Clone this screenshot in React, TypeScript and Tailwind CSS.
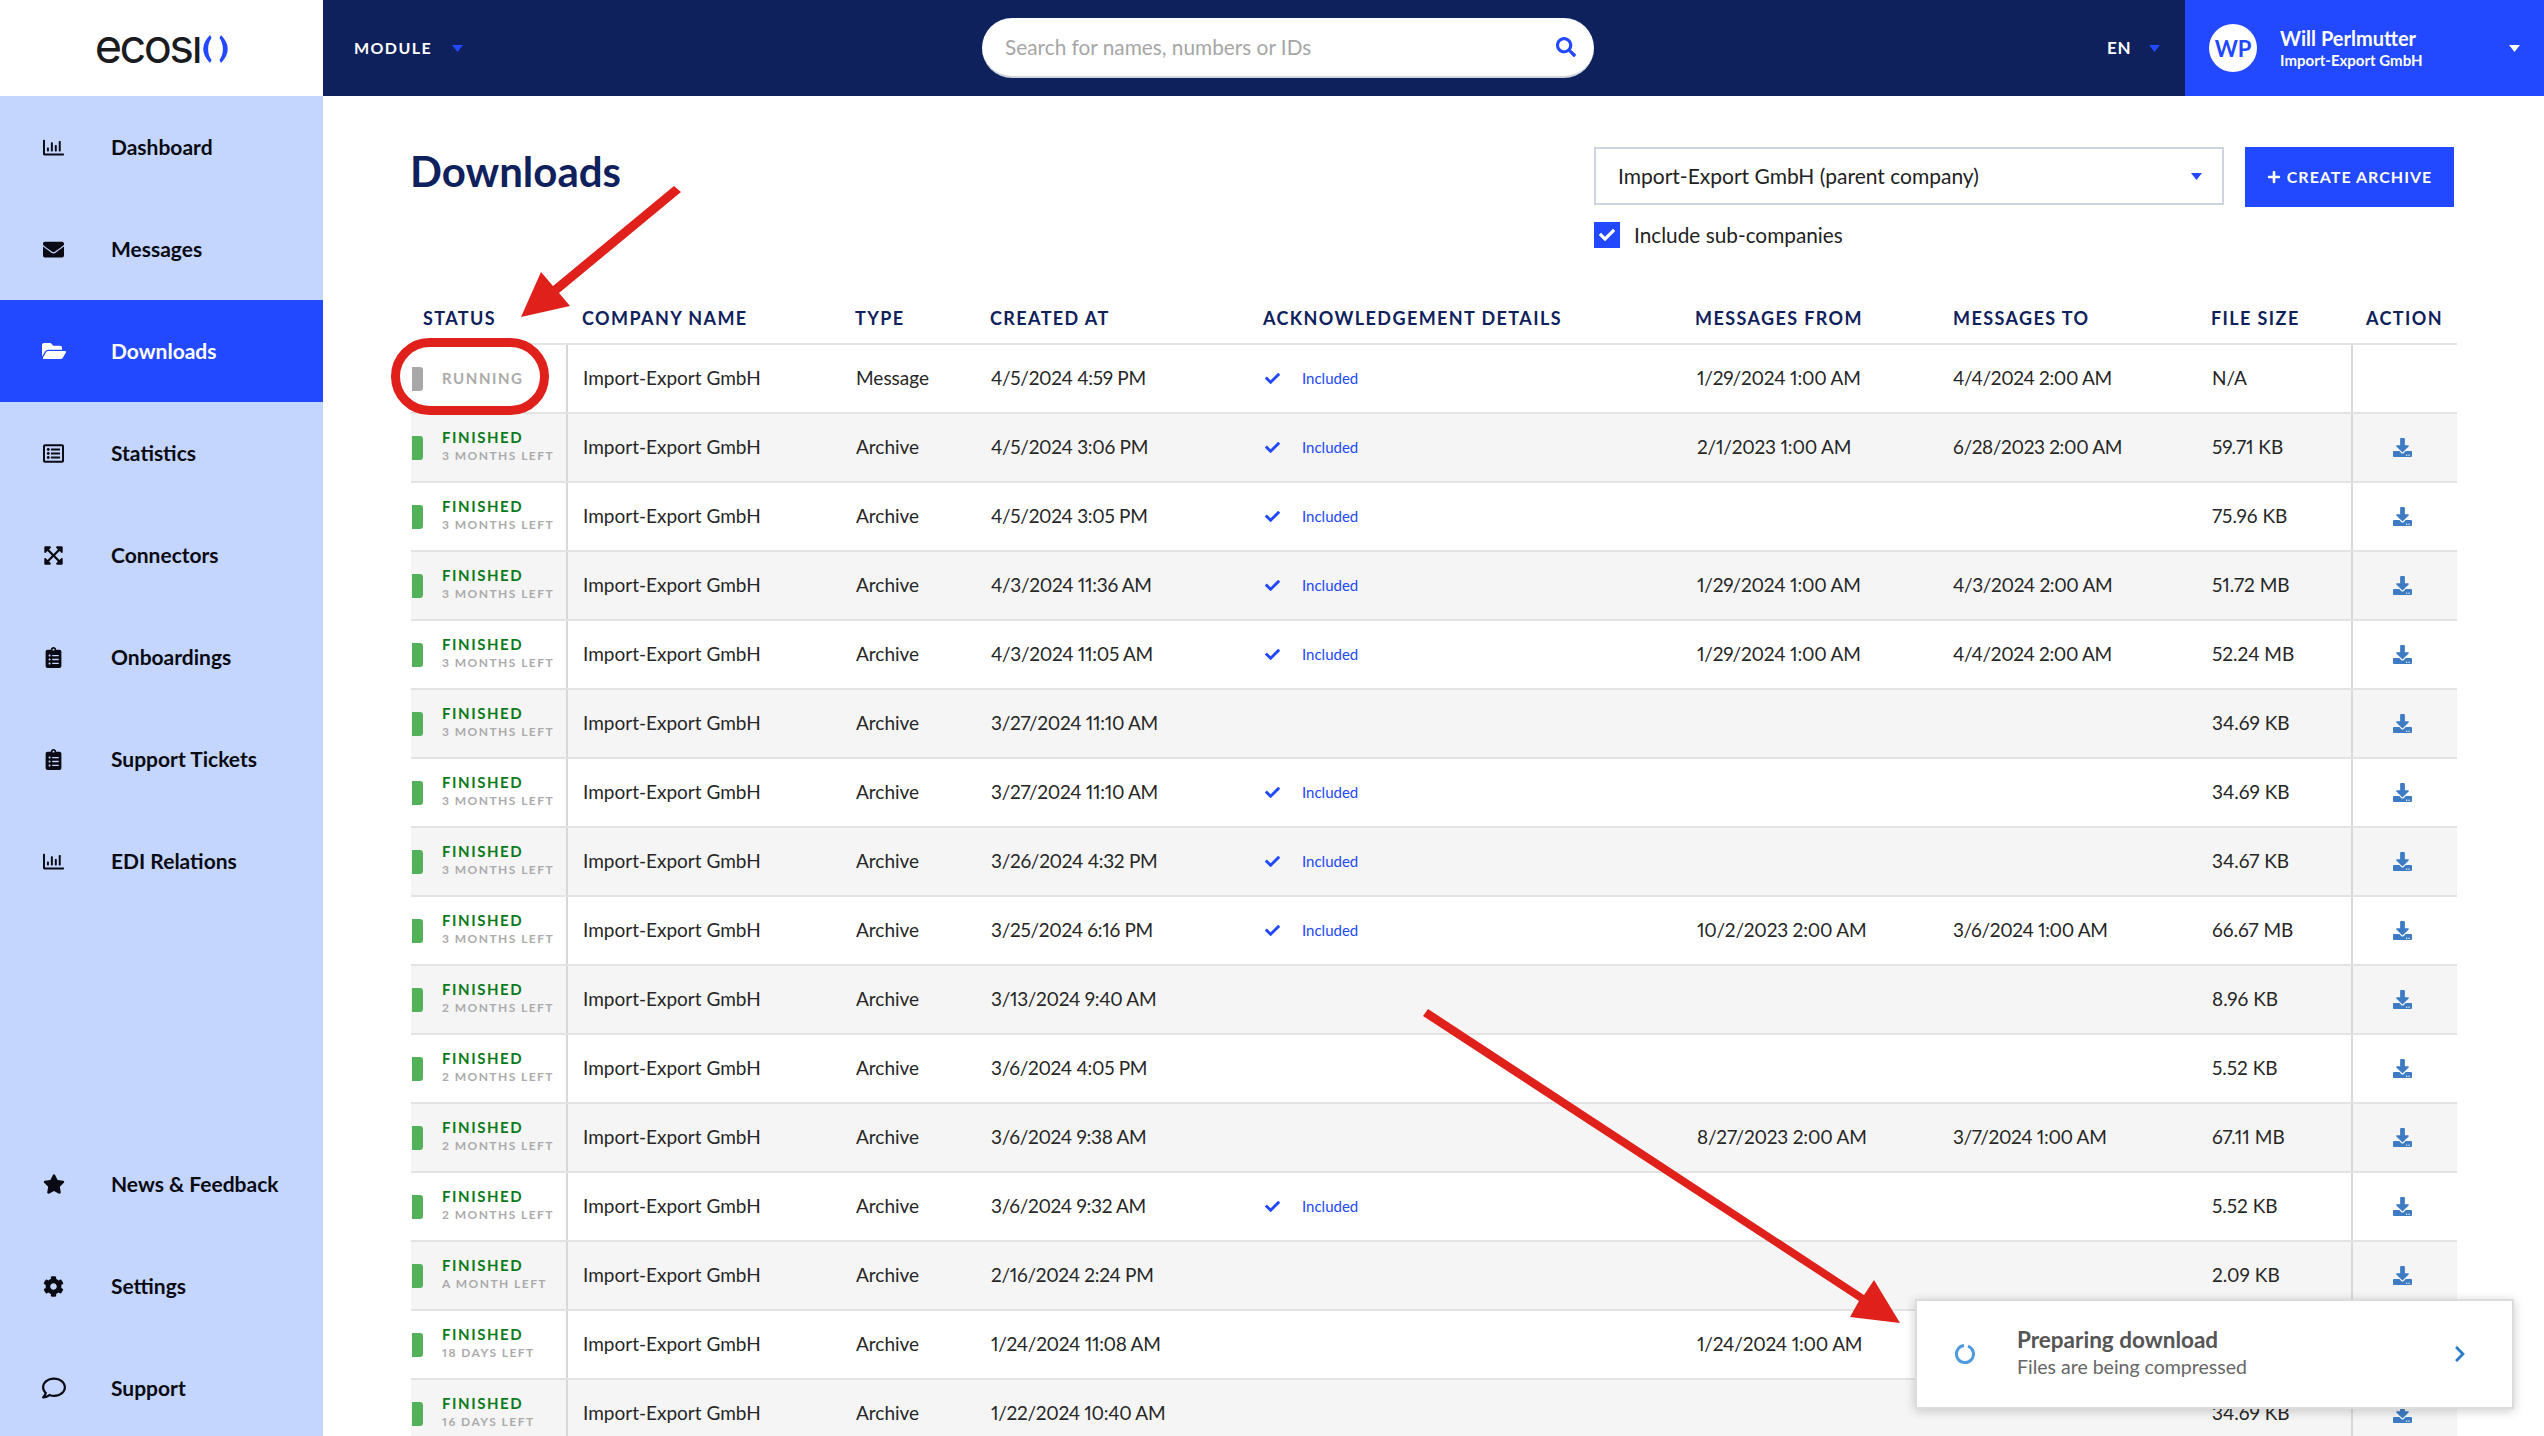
import React from "react";
import {
  FaRegChartBar, FaEnvelope, FaFolderOpen, FaRegListAlt, FaExpandArrowsAlt, FaClipboardList,
  FaStar, FaCog, FaRegComment, FaDownload, FaCheck, FaSearch, FaPlus, FaChevronRight,
} from "react-icons/fa";

const top = [
  { label: "Dashboard", Icon: FaRegChartBar, size: 21 },
  { label: "Messages", Icon: FaEnvelope, size: 21 },
  { label: "Downloads", Icon: FaFolderOpen, size: 24, active: true },
  { label: "Statistics", Icon: FaRegListAlt, size: 21 },
  { label: "Connectors", Icon: FaExpandArrowsAlt, size: 21 },
  { label: "Onboardings", Icon: FaClipboardList, size: 21 },
  { label: "Support Tickets", Icon: FaClipboardList, size: 21 },
  { label: "EDI Relations", Icon: FaRegChartBar, size: 21 },
];
const bottom = [
  { label: "News & Feedback", Icon: FaStar, size: 22 },
  { label: "Settings", Icon: FaCog, size: 21 },
  { label: "Support", Icon: FaRegComment, size: 24 },
];

type Row = { left: string; type: string; at: string; inc?: boolean; from?: string; to?: string; size: string };
const M3 = "3 MONTHS LEFT";
const M2 = "2 MONTHS LEFT";
const rows: Row[] = [
  { left: "", type: "Message", at: "4/5/2024 4:59 PM", inc: true, from: "1/29/2024 1:00 AM", to: "4/4/2024 2:00 AM", size: "N/A" },
  { left: M3, type: "Archive", at: "4/5/2024 3:06 PM", inc: true, from: "2/1/2023 1:00 AM", to: "6/28/2023 2:00 AM", size: "59.71 KB" },
  { left: M3, type: "Archive", at: "4/5/2024 3:05 PM", inc: true, size: "75.96 KB" },
  { left: M3, type: "Archive", at: "4/3/2024 11:36 AM", inc: true, from: "1/29/2024 1:00 AM", to: "4/3/2024 2:00 AM", size: "51.72 MB" },
  { left: M3, type: "Archive", at: "4/3/2024 11:05 AM", inc: true, from: "1/29/2024 1:00 AM", to: "4/4/2024 2:00 AM", size: "52.24 MB" },
  { left: M3, type: "Archive", at: "3/27/2024 11:10 AM", size: "34.69 KB" },
  { left: M3, type: "Archive", at: "3/27/2024 11:10 AM", inc: true, size: "34.69 KB" },
  { left: M3, type: "Archive", at: "3/26/2024 4:32 PM", inc: true, size: "34.67 KB" },
  { left: M3, type: "Archive", at: "3/25/2024 6:16 PM", inc: true, from: "10/2/2023 2:00 AM", to: "3/6/2024 1:00 AM", size: "66.67 MB" },
  { left: M2, type: "Archive", at: "3/13/2024 9:40 AM", size: "8.96 KB" },
  { left: M2, type: "Archive", at: "3/6/2024 4:05 PM", size: "5.52 KB" },
  { left: M2, type: "Archive", at: "3/6/2024 9:38 AM", from: "8/27/2023 2:00 AM", to: "3/7/2024 1:00 AM", size: "67.11 MB" },
  { left: M2, type: "Archive", at: "3/6/2024 9:32 AM", inc: true, size: "5.52 KB" },
  { left: "A MONTH LEFT", type: "Archive", at: "2/16/2024 2:24 PM", size: "2.09 KB" },
  { left: "18 DAYS LEFT", type: "Archive", at: "1/24/2024 11:08 AM", from: "1/24/2024 1:00 AM", size: "" },
  { left: "16 DAYS LEFT", type: "Archive", at: "1/22/2024 10:40 AM", size: "34.69 KB" },
];

const cols = "grid grid-cols-[157px_272px_135px_274px_432px_256px_258px_158px_104px]";

function Caret({ color }: { color: string }) {
  return (
    <svg width="11" height="7" viewBox="0 0 11 7" className="block">
      <path d="M0 0h11L5.5 7z" fill={color} />
    </svg>
  );
}

function NavItem({ label, Icon, size, active }: { label: string; Icon: any; size: number; active?: boolean }) {
  return (
    <div className={`flex h-[102px] shrink-0 items-center ${active ? "bg-[#2249ff] text-white" : "text-[#0a0a14]"}`}>
      <span className="flex w-[111px] justify-center pr-[4px]">
        <Icon size={size} />
      </span>
      <span className="text-[21px] font-bold">{label}</span>
    </div>
  );
}

export default function App() {
  return (
    <div className="relative flex h-[1436px] w-full overflow-hidden bg-white font-['Lato','Noto_Sans',sans-serif] proportional-nums">
      <aside className="flex w-[323px] shrink-0 flex-col bg-[#c4d6fe]">
        <div className="flex h-[96px] shrink-0 items-center justify-center bg-white">
          <span className="flex items-center text-[#1b1b1f]">
            <span className="font-['Inter',sans-serif] text-[47px] leading-none tracking-[-2.6px] pb-[6px]">ecosı</span>
            <svg width="25" height="28" viewBox="0 0 25 28" className="ml-[3px] mt-[2px]" fill="#2249ff">
              <path d="M7 0C-2 9-2 19 7 28L8.5 25C4 19 4 9 8.5 3Z" />
              <path d="M18 0C27 9 27 19 18 28L16.5 25C21 19 21 9 16.5 3Z" />
            </svg>
          </span>
        </div>
        {top.map((n) => <NavItem key={n.label} {...n} />)}
        <div className="h-[221px] shrink-0" />
        {bottom.map((n) => <NavItem key={n.label} {...n} />)}
      </aside>

      <div className="flex min-w-0 flex-1 flex-col">
        <header className="flex h-[96px] shrink-0 items-center bg-[#0f215c] text-white">
          <span className="ml-[31px] text-[16px] font-bold tracking-[1.4px]">MODULE</span>
          <span className="ml-[20px]"><Caret color="#2249ff" /></span>
          <div className="ml-[519px] flex h-[60px] w-[612px] items-center justify-between rounded-full border-b-2 border-[#d0d3dc] bg-white pl-[23px] pr-[18px]">
            <span className="text-[20.8px] text-[#a6a6a6]">Search for names, numbers or IDs</span>
            <FaSearch size={20} color="#2249ff" />
          </div>
          <span className="ml-[513px] text-[17px] font-bold tracking-[0.6px]">EN</span>
          <span className="ml-[18px]"><Caret color="#2249ff" /></span>
          <div className="ml-[25px] flex h-[96px] flex-1 items-center bg-[#2249ff]">
            <span className="ml-[24px] flex h-[48px] w-[48px] items-center justify-center rounded-full bg-white text-[22px] font-bold text-[#2249ff]">WP</span>
            <div className="ml-[23px] flex flex-1 flex-col">
              <span className="text-[20px] font-bold leading-[24px]">Will Perlmutter</span>
              <span className="text-[15px] font-bold leading-[20px]">Import-Export GmbH</span>
            </div>
            <span className="mr-[24px]"><Caret color="#ffffff" /></span>
          </div>
        </header>

        <main className="flex-1 pl-[88px]">
          <div className="flex h-[210px] items-start">
            <h1 className="-ml-[1px] w-[1184px] pt-[46px] text-[42px] font-bold leading-[58px] text-[#0f215c]">Downloads</h1>
            <div className="pt-[51px]">
              <div className="flex h-[58px] w-[630px] items-center justify-between border-2 border-[#cfd3e0] bg-white pl-[22px] pr-[20px] text-[21px] text-[#222]">
                <span>Import-Export GmbH (parent company)</span>
                <Caret color="#2249ff" />
              </div>
              <div className="mt-[17px] flex items-center">
                <span className="flex h-[26px] w-[26px] items-center justify-center bg-[#2249ff] text-white">
                  <FaCheck size={16} />
                </span>
                <span className="ml-[14px] text-[20.8px] leading-[26px] text-[#222]">Include sub-companies</span>
              </div>
            </div>
            <div className="ml-[21px] mt-[51px] flex h-[60px] w-[209px] items-center justify-center gap-[6px] bg-[#2249ff] text-[16px] font-bold tracking-[1px] text-white">
              <FaPlus size={14} />
              <span>CREATE ARCHIVE</span>
            </div>
          </div>

          <div className={`${cols} h-[37px] w-[2046px] items-start text-[18px] font-bold leading-[24px] tracking-[1.4px] text-[#0f215c]`}>
            <span className="pl-[12px]">STATUS</span>
            <span className="pl-[14px]">COMPANY NAME</span>
            <span className="pl-[15px]">TYPE</span>
            <span className="pl-[15px]">CREATED AT</span>
            <span className="pl-[14px]">ACKNOWLEDGEMENT DETAILS</span>
            <span className="pl-[14px]">MESSAGES FROM</span>
            <span className="pl-[16px]">MESSAGES TO</span>
            <span className="pl-[16px]">FILE SIZE</span>
            <span className="pl-[13px]">ACTION</span>
          </div>

          <div className="w-[2046px] border-l-2 border-r-2 border-[#e3e3e3]">
            {rows.map((r, i) => (
              <div key={i} className={`${cols} -mx-[2px] h-[69px] border-t-2 border-[#e3e3e3] text-[19px] text-[#262626] ${i % 2 ? "bg-[#f5f5f5]" : "bg-white"}`}>
                <div className="flex items-center border-r-2 border-[#d8d8d8]">
                  <span className={`ml-[1px] h-[24px] w-[11px] rounded-r-[3px] ${r.left ? "bg-[#52b159]" : "bg-[#a8a8a8]"}`} />
                  <div className="ml-[19px] flex flex-col">
                    {r.left ? (
                      <div className="flex -translate-y-[1px] flex-col">
                        <span className="text-[15px] font-bold leading-[19px] tracking-[1.55px] text-[#0c7a1c]">FINISHED</span>
                        <span className="text-[12px] font-bold leading-[18px] tracking-[1.45px] text-[#ababab]">{r.left}</span>
                      </div>
                    ) : (
                      <span className="text-[15px] font-bold tracking-[1.55px] text-[#ababab]">RUNNING</span>
                    )}
                  </div>
                </div>
                <div className="flex items-center pl-[15px]">Import-Export GmbH</div>
                <div className="flex items-center pl-[16px]">{r.type}</div>
                <div className="flex items-center pl-[16px] tracking-[-0.3px]">{r.at}</div>
                <div className="flex items-center pl-[16px]">
                  {r.inc && (
                    <>
                      <FaCheck size={15} color="#2249ff" />
                      <span className="ml-[22px] text-[15px] text-[#2249ff]">Included</span>
                    </>
                  )}
                </div>
                <div className="flex items-center pl-[16px] tracking-[-0.2px]">{r.from}</div>
                <div className="flex items-center pl-[16px] tracking-[-0.35px]">{r.to}</div>
                <div className="flex items-center border-r-2 border-[#d8d8d8] pl-[17px]">{r.size}</div>
                <div className="flex items-center justify-center pr-[6px]">
                  {r.left && <FaDownload size={19} color="#3d7cc4" />}
                </div>
              </div>
            ))}
          </div>
        </main>
      </div>

      {/* annotation overlays */}
      <div className="absolute left-[391px] top-[338px] h-[77px] w-[158px] rounded-full border-[9px] border-[#e0201a]" />
      <svg className="pointer-events-none absolute left-0 top-0" width="2544" height="1436" viewBox="0 0 2544 1436">
        <path d="M674 186L681 192L559 293L570 306L521 317L541 272L553 286Z" fill="#e0201a" />
        <path d="M1428 1009L1864 1295L1874 1280L1900 1323L1850 1317L1859 1301L1423 1016Z" fill="#e0201a" />
      </svg>

      <div className="absolute left-[1915px] top-[1299px] flex h-[110px] w-[599px] items-center border-2 border-[#dcdcdc] bg-white shadow-[0_2px_10px_rgba(0,0,0,0.2)]">
        <svg width="20" height="22" viewBox="0 0 20 22" className="ml-[38px]" fill="none">
          <path d="M13 3.1A8.5 8.5 0 1 1 9 2.6" stroke="#4f9be0" strokeWidth="3" />
        </svg>
        <div className="ml-[42px] flex flex-1 flex-col -translate-y-[2px]">
          <span className="text-[22.5px] font-bold leading-[28px] text-[#555]">Preparing download</span>
          <span className="text-[19.5px] leading-[25px] text-[#666]">Files are being compressed</span>
        </div>
        <FaChevronRight size={18} color="#2a7bc8" className="mr-[43px]" />
      </div>
    </div>
  );
}
